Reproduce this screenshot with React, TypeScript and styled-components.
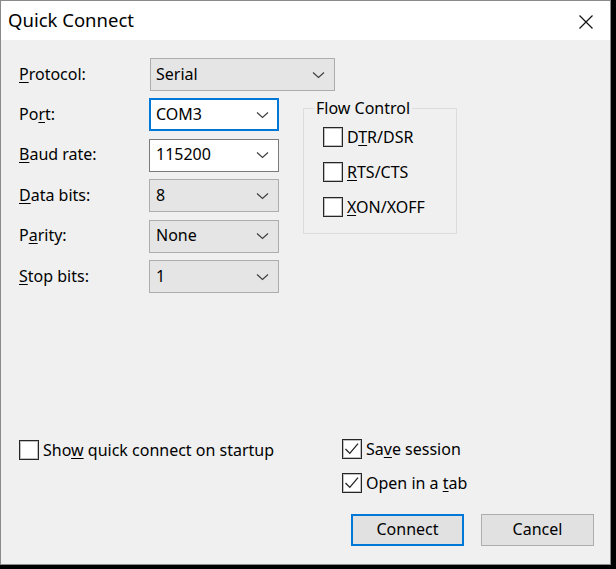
import React from "react";
import styled, { createGlobalStyle } from "styled-components";

const GlobalStyle = createGlobalStyle`
  html, body {
    margin: 0;
    padding: 0;
    background: #000000;
  }
  body {
    font-family: "Noto Sans", "Open Sans", sans-serif;
    color: #000000;
  }
`;

type ComboProps = {
  value: string;
  variant?: "list" | "edit" | "focus";
  wide?: boolean;
};

const Combo: React.FC<ComboProps> = ({ value, variant = "list", wide }) => (
  <ComboBox $variant={variant} $wide={wide}>
    <ComboText>{value}</ComboText>
    <Chevron width="13" height="8" viewBox="0 0 13 8">
      <path d="M1 1.5 L6.5 6.5 L12 1.5" fill="none" stroke="#3c3c3c" strokeWidth="1.1" />
    </Chevron>
  </ComboBox>
);

type CheckProps = {
  checked?: boolean;
  children: React.ReactNode;
};

const Check: React.FC<CheckProps> = ({ checked, children }) => (
  <CheckRow>
    <Box>
      {checked && (
        <svg width="18" height="18" viewBox="0 0 18 18">
          <path d="M2.5 9 L6.8 13.4 L15 3.6" fill="none" stroke="#222" strokeWidth="1.3" />
        </svg>
      )}
    </Box>
    <span>{children}</span>
  </CheckRow>
);

export default function App() {
  return (
    <>
      <GlobalStyle />
      <Window>
        <TitleBar>
          <Title>Quick Connect</Title>
          <CloseButton>
            <svg width="14" height="14" viewBox="0 0 14 14">
              <path d="M0.5 0.5 L13.5 13.5 M13.5 0.5 L0.5 13.5" stroke="#111" strokeWidth="1.2" />
            </svg>
          </CloseButton>
        </TitleBar>
        <Client>
          <TopArea>
            <ProtocolRow>
              <Label>
                <u>P</u>rotocol:
              </Label>
              <Combo value="Serial" wide />
            </ProtocolRow>
            <SettingsRow>
              <Form>
                <Label>
                  Po<u>r</u>t:
                </Label>
                <Combo value="COM3" variant="focus" />
                <Label>
                  <u>B</u>aud rate:
                </Label>
                <Combo value="115200" variant="edit" />
                <Label>
                  <u>D</u>ata bits:
                </Label>
                <Combo value="8" />
                <Label>
                  P<u>a</u>rity:
                </Label>
                <Combo value="None" />
                <Label>
                  <u>S</u>top bits:
                </Label>
                <Combo value="1" />
              </Form>
              <Group>
                <Legend>Flow Control</Legend>
                <GroupList>
                  <Check>
                    D<u>T</u>R/DSR
                  </Check>
                  <Check>
                    <u>R</u>TS/CTS
                  </Check>
                  <Check>
                    <u>X</u>ON/XOFF
                  </Check>
                </GroupList>
              </Group>
            </SettingsRow>
          </TopArea>
          <BottomArea>
            <LeftOptions>
              <Check>
                Sho<u>w</u> quick connect on startup
              </Check>
            </LeftOptions>
            <RightOptions>
              <Check checked>
                Sa<u>v</u>e session
              </Check>
              <Check checked>
                Open in a <u>t</u>ab
              </Check>
              <Buttons>
                <Button $primary>Connect</Button>
                <Button>Cancel</Button>
              </Buttons>
            </RightOptions>
          </BottomArea>
        </Client>
      </Window>
    </>
  );
}

const Window = styled.div`
  width: 609px;
  height: 563px;
  border: 1px solid #8a8a8a;
  background: #f0f0f0;
  display: flex;
  flex-direction: column;
  font-size: 16px;
`;

const TitleBar = styled.div`
  height: 39px;
  background: #ffffff;
  display: flex;
  align-items: center;
  justify-content: space-between;
  padding: 0 17px 0 7px;
`;

const Title = styled.div`
  font-size: 18.5px;
  padding-bottom: 2px;
`;

const CloseButton = styled.div`
  display: flex;
  padding-top: 2px;
`;

const Client = styled.div`
  flex: 1;
  display: flex;
  flex-direction: column;
  padding: 18px 16px 18px 15px;
`;

const TopArea = styled.div`
  display: flex;
  flex-direction: column;
  gap: 7px;
`;

const ProtocolRow = styled.div`
  display: grid;
  grid-template-columns: 131px auto;
  align-items: center;
  padding-left: 3px;
`;

const SettingsRow = styled.div`
  display: flex;
  align-items: flex-start;
  gap: 24px;
`;

const Form = styled.div`
  display: grid;
  grid-template-columns: 130px 130px;
  grid-auto-rows: 33px;
  row-gap: 7.6px;
  align-items: center;
  padding-left: 3px;
`;

const Label = styled.div`
  white-space: nowrap;
  line-height: 20px;
  padding-bottom: 2px;

  u {
    text-underline-offset: 2px;
  }
`;

const ComboBox = styled.div<{ $variant: "list" | "edit" | "focus"; $wide?: boolean }>`
  box-sizing: border-box;
  width: ${(p) => (p.$wide ? "185px" : "130px")};
  height: 33px;
  display: flex;
  align-items: center;
  justify-content: space-between;
  padding: 0 9px 0 ${(p) => (p.$wide ? "5px" : "6px")};
  background: ${(p) => (p.$variant === "list" ? "#e5e5e5" : "#ffffff")};
  border: 1px solid
    ${(p) => (p.$variant === "focus" ? "#0078d7" : p.$variant === "edit" ? "#7a7a7a" : "#adadad")};
  box-shadow: ${(p) => (p.$variant === "focus" ? "inset 0 0 0 1px #0078d7" : "none")};
`;

const ComboText = styled.span`
  padding-bottom: 2px;
`;

const Chevron = styled.svg`
  flex: none;
`;

const Group = styled.fieldset`
  margin: 0;
  width: 154px;
  height: 136px;
  box-sizing: border-box;
  border: 1px solid #dcdcdc;
  padding: 9px 0 0 19px;
`;

const Legend = styled.legend`
  padding: 0 2px;
  margin-left: -9px;
  line-height: 20px;
`;

const GroupList = styled.div`
  display: flex;
  flex-direction: column;
  gap: 15px;
`;

const CheckRow = styled.label`
  display: flex;
  align-items: center;
  gap: 4px;
  white-space: nowrap;
  line-height: 20px;

  u {
    text-underline-offset: 2px;
  }
`;

const Box = styled.span`
  box-sizing: border-box;
  width: 20px;
  height: 20px;
  border: 1px solid #262626;
  box-shadow: inset 0 0 0 1px rgba(0, 0, 0, 0.25);
  background: #ffffff;
  display: flex;
  align-items: center;
  justify-content: center;
  flex: none;
`;

const BottomArea = styled.div`
  margin-top: auto;
  display: grid;
  grid-template-columns: 1fr 252px;
  padding-left: 3px;
`;

const LeftOptions = styled.div`
  display: flex;
  flex-direction: column;
  padding-top: 1px;
`;

const RightOptions = styled.div`
  display: flex;
  flex-direction: column;
  gap: 14px;
`;

const Buttons = styled.div`
  display: flex;
  justify-content: flex-end;
  gap: 17px;
  margin-top: 7px;
`;

const Button = styled.button<{ $primary?: boolean }>`
  width: 113px;
  height: 32px;
  box-sizing: border-box;
  font-family: inherit;
  font-size: 16px;
  color: #000000;
  background: #e1e1e1;
  border: ${(p) => (p.$primary ? "2px solid #0078d7" : "1px solid #adadad")};
  padding: 0 0 2px;
`;
